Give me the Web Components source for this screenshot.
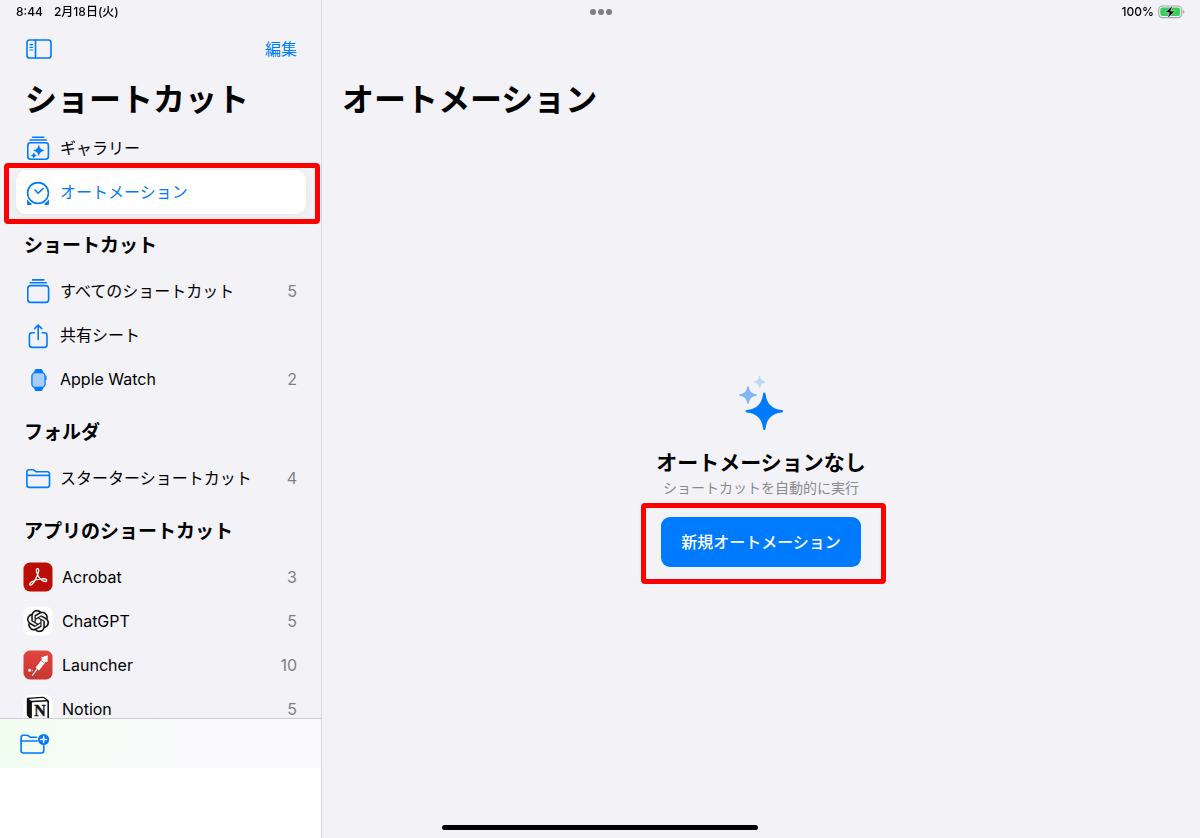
<!DOCTYPE html>
<html lang="ja">
<head>
<meta charset="UTF-8">
<meta name="viewport" content="width=device-width, initial-scale=1">
<title>ショートカット</title>
<style>
  :root {
    --accent: #007aff;
    --surface: #f2f2f7;
    --separator: #d8d8dd;
    --mark: #ff0000;
  }

  body {
    margin: 0;
    font-family: Inter, "Noto Sans CJK JP", sans-serif;
    font-size: 16px;
    line-height: 20px;
    color: #000;
    background: var(--surface);
  }
</style>
</head>
<body>

<shortcuts-app>
  <status-bar slot="status" time="8:44" date="2月18日(火)" battery="100%"></status-bar>

  <side-bar slot="sidebar" heading="ショートカット">
    <side-row icon="gallery">ギャラリー</side-row>
    <side-row icon="clock" selected>オートメーション<mark-frame slot="mark"></mark-frame></side-row>
    <side-heading>ショートカット</side-heading>
    <side-row icon="stack" count="5">すべてのショートカット</side-row>
    <side-row icon="share">共有シート</side-row>
    <side-row icon="watch" count="2">Apple Watch</side-row>
    <side-heading>フォルダ</side-heading>
    <side-row icon="folder" count="4">スターターショートカット</side-row>
    <side-heading>アプリのショートカット</side-heading>
    <side-row app icon="acrobat" count="3">Acrobat</side-row>
    <side-row app icon="chatgpt" count="5">ChatGPT</side-row>
    <side-row app icon="launcher" count="10">Launcher</side-row>
    <side-row app icon="notion" count="5">Notion</side-row>
  </side-bar>

  <automation-view heading="オートメーション">
    <empty-state>
      <span slot="title">オートメーションなし</span>
      <span slot="text">ショートカットを自動的に実行</span>
      <span slot="action">新規オートメーション</span>
      <mark-frame slot="mark"></mark-frame>
    </empty-state>
  </automation-view>
</shortcuts-app>

<script>
const ICONS = {
  toggle: [26, 20, `
    <g fill="none" stroke="currentColor" stroke-width="1.6" stroke-linecap="round">
      <rect x="1" y="1" width="24" height="18" rx="2.6"/>
      <path d="M9.5 1v18"/>
      <path d="M4 5.6h2.6M4 8.3h2.6M4 11h2.6" stroke-width="1.2"/>
    </g>`],
  gallery: [30, 30, `
    <g fill="none" stroke="currentColor" stroke-width="1.6" stroke-linecap="round">
      <rect x="4.8" y="9.8" width="20.6" height="16.4" rx="2.6"/>
      <path d="M9.6 4.2h11.2M7.2 7h16"/>
    </g>
    <path fill="currentColor" d="M15.8 12q.8 4.7 5.400 5.400q-4.600.8-5.400 5.400q-.8-4.600-5.400-5.400q4.600-.8 5.400-5.400zM10.800 19.800q.5 2.200 2.600 2.600q-2.100.5-2.600 2.600q-.5-2.100-2.600-2.600q2.100-.5 2.600-2.600z" stroke="currentColor" stroke-width=".3"/>`],
  clock: [30, 30, `
    <g fill="none" stroke="currentColor" stroke-width="1.6" stroke-linecap="round" stroke-linejoin="round">
      <circle cx="15" cy="16" r="10.400"/>
      <path d="M12 13l3.100 3.200 5-4.700"/>
    </g>
    <path fill="currentColor" d="M4.100 22.200q1.600 2.800 5 4.800l-1.200 1H5q-1 0-1-1zM25.900 22.200q-1.600 2.800-5 4.800l1.200 1H25q1 0 1-1z"/>`],
  stack: [30, 30, `
    <g fill="none" stroke="currentColor" stroke-width="1.6" stroke-linecap="round">
      <rect x="4.8" y="9.6" width="20.8" height="16.8" rx="2.8"/>
      <path d="M9.6 3.9h11.2M7.2 6.7h16"/>
    </g>`],
  share: [30, 30, `
    <g fill="none" stroke="currentColor" stroke-width="1.6" stroke-linecap="round" stroke-linejoin="round">
      <path d="M11.2 12.8H9q-2.600 0-2.600 2.600v9.400q0 2.600 2.600 2.600h12.400q2.600 0 2.600-2.600v-9.400q0-2.600-2.600-2.600h-2.200"/>
      <path d="M15.200 19.600V5.300M11.600 8.600l3.600-3.500 3.600 3.500"/>
    </g>`],
  watch: [30, 30, `
    <path fill="currentColor" d="M11.5 6.500q.3-1.500 1.800-1.500h4.600q1.500 0 1.800 1.500l.9 3.500v12l-.9 3.500q-.3 1.500-1.800 1.500h-4.600q-1.500 0-1.800-1.500l-.9-3.500V10z"/>
    <rect x="8.900" y="8.700" width="13.200" height="14.800" rx="3.600" fill="#a6cdfb" stroke="currentColor" stroke-width="1.300"/>
    <path d="M23 12.500v3" stroke="currentColor" stroke-width="1.200" stroke-linecap="round"/>`],
  folder: [30, 30, `
    <g fill="none" stroke="currentColor" stroke-width="1.6" stroke-linejoin="round">
      <path d="M3.900 9q0-2.200 2.300-2.200h3.500q.9 0 1.600.6l1.200 1q.5.400 1.300.400h10.500q2.200 0 2.200 2.200v11q0 2.400-2.400 2.400H6.300q-2.400 0-2.400-2.400z"/>
      <path d="M3.900 12.400h22.600"/>
    </g>`],
  newFolder: [30, 22, `
    <g fill="none" stroke="currentColor" stroke-width="1.6" stroke-linecap="round" stroke-linejoin="round">
      <path d="M16.500 4.300H11q-.8 0-1.300-.4l-1.200-1q-.7-.6-1.600-.6H3.500q-2.400 0-2.400 2.300v13q0 2.400 2.400 2.400h18q2.300 0 2.300-2.400v-4.800"/>
      <path d="M1.100 8h16.200"/>
    </g>
    <circle cx="23.600" cy="6.500" r="5.600" fill="currentColor"/>
    <path d="M20.600 6.500h6M23.600 3.500v6" stroke="#fff" stroke-width="1.400" stroke-linecap="round"/>`],
  sparkles: [44, 54, `
    <path fill="#007aff" d="M25.300 16.500q1 0 1.200 1.300q1.500 14.800 16.300 16.300q1.300.2 1.300 1.200t-1.300 1.200q-14.800 1.500-16.300 16.300q-.2 1.300-1.200 1.300t-1.200-1.300q-1.500-14.800-16.300-16.300q-1.300-.2-1.300-1.200t1.300-1.200q14.800-1.500 16.300-16.300q.2-1.300 1.200-1.300z"/>
    <path fill="#7db7fa" d="M9 10q.6 0 .7.800q.8 6.700 7.500 7.500q.8.100.8.700t-.8.700q-6.700.8-7.500 7.500q-.1.800-.7.800t-.7-.8q-.8-6.700-7.500-7.500q-.8-.1-.8-.7t.8-.7q6.700-.8 7.500-7.500q.1-.8.7-.8z"/>
    <path fill="#bad8fb" d="M20.600 0q.5 0 .6.600q.5 4.300 4.800 4.800q.6.100.6.600t-.6.600q-4.300.5-4.800 4.800q-.1.600-.6.600t-.6-.6q-.5-4.300-4.800-4.800q-.6-.1-.6-.6t.6-.6q4.300-.5 4.800-4.800q.1-.6.6-.6z"/>`],
  acrobat: [30, 30, `
    <rect x=".5" y=".5" width="29" height="29" rx="6.500" fill="#b90d05"/>
    <path fill="none" stroke="#fff" stroke-width="1.300" stroke-linejoin="round" d="M14.900 6.700c-1.500-.3-1.900 1.600-1.200 3.700 1.100 3.600 4.200 7.600 6.800 8.700 1.900.8 3.300.3 3.200-.8-.1-1.200-2-1.700-4.600-1.500-3.600.2-7.700 1.400-10.300 2.900-1.900 1.100-2.600 2.500-1.700 3.200 1 .7 2.800-1 4.600-4.300 1.800-3.200 3.500-6.700 3.900-9.300.2-1.500 0-2.500-.7-2.600z"/>`],
  chatgpt: [30, 30, `
    <rect x=".5" y=".5" width="29" height="29" rx="6.500" fill="#fff"/>
    <path transform="translate(4 4) scale(.92)" fill="#111" stroke="#111" stroke-width=".2" d="M22.2819 9.8211a5.9847 5.9847 0 0 0-.5157-4.9108 6.0462 6.0462 0 0 0-6.5098-2.9A6.0651 6.0651 0 0 0 4.9807 4.1818a5.9847 5.9847 0 0 0-3.9977 2.9 6.0462 6.0462 0 0 0 .7427 7.0966 5.98 5.98 0 0 0 .511 4.9107 6.051 6.051 0 0 0 6.5146 2.9001A5.9847 5.9847 0 0 0 13.2599 24a6.0557 6.0557 0 0 0 5.7718-4.2058 5.9894 5.9894 0 0 0 3.9977-2.9001 6.0557 6.0557 0 0 0-.7475-7.0729zm-9.022 12.6081a4.4755 4.4755 0 0 1-2.8764-1.0408l.1419-.0804 4.7783-2.7582a.7948.7948 0 0 0 .3927-.6813v-6.7369l2.02 1.1686a.071.071 0 0 1 .038.052v5.5826a4.504 4.504 0 0 1-4.4945 4.4944zm-9.6607-4.1254a4.4708 4.4708 0 0 1-.5346-3.0137l.142.0852 4.783 2.7582a.7712.7712 0 0 0 .7806 0l5.8428-3.3685v2.3324a.0804.0804 0 0 1-.0332.0615L9.74 19.9502a4.4992 4.4992 0 0 1-6.1408-1.6464zM2.3408 7.8956a4.485 4.485 0 0 1 2.3655-1.9728V11.6a.7664.7664 0 0 0 .3879.6765l5.8144 3.3543-2.0201 1.1685a.0757.0757 0 0 1-.071 0l-4.8303-2.7865A4.504 4.504 0 0 1 2.3408 7.872zm16.5963 3.8558L13.1038 8.364 15.1192 7.2a.0757.0757 0 0 1 .071 0l4.8303 2.7913a4.4944 4.4944 0 0 1-.6765 8.1042v-5.6772a.79.79 0 0 0-.407-.667zm2.0107-3.0231l-.142-.0852-4.7735-2.7818a.7759.7759 0 0 0-.7854 0L9.409 9.2297V6.8974a.0662.0662 0 0 1 .0284-.0615l4.8303-2.7866a4.4992 4.4992 0 0 1 6.6802 4.66zM8.3065 12.863l-2.02-1.1638a.0804.0804 0 0 1-.038-.0567V6.0742a4.4992 4.4992 0 0 1 7.3757-3.4537l-.142.0805L8.704 5.459a.7948.7948 0 0 0-.3927.6813zm1.0976-2.3654l2.602-1.4998 2.6069 1.4998v2.9994l-2.5974 1.4997-2.6067-1.4997Z"/>`],
  launcher: [30, 30, `
    <defs>
      <linearGradient id="red" x1="0" y1="0" x2="0" y2="1">
        <stop offset="0" stop-color="#e2463f"/>
        <stop offset="1" stop-color="#c6362f"/>
      </linearGradient>
    </defs>
    <rect x=".5" y=".5" width="29" height="29" rx="6.500" fill="url(#red)"/>
    <path fill="#fff" d="M24.800 5.200l-.2 6.900-1.900-.3-6.600 8.700-3.500-2.700 6.400-8.900-1.100-1.400z"/>
    <path d="M17.800 10.200l3.600 2.700" stroke="#d23e37" stroke-width=".8"/>
    <path d="M13.800 19.600l-4.300 5.600" stroke="#fff" stroke-width="1.100" stroke-linecap="round"/>
    <circle cx="6.700" cy="20.300" r="1.500" fill="#fff"/>
    <circle cx="9.400" cy="20.600" r=".6" fill="#fff"/>`],
  notion: [30, 30, `
    <rect x=".5" y=".5" width="29" height="29" rx="6.500" fill="#fff"/>
    <path fill="#111" d="M3.800 4.900q0-1 1-1.100l14.600-1.100q1.300-.1 2.200.6l3.600 2.700q.8.600.8 1.600V25q0 1.300-1.300 1.400l-15 .9q-1 .1-1.700-.8l-3.500-4.500q-.7-.9-.7-2z"/>
    <path fill="#fff" d="M5.800 4.900l13.600-1q.8 0 1.400.4l2.300 1.600-13.900.9q-.8 0-1.400-.4zM8.900 9.200q0-.9.900-.9l13.800-.8q.8 0 .8.800v16q0 .8-.8.800l-13.800.8q-.9 0-.9-.8z"/>
    <text x="17" y="22" text-anchor="middle" font-family="Liberation Serif, serif" font-weight="bold" font-size="16" fill="#111" stroke="#111" stroke-width=".4">N</text>`],
  battery: [28, 14, `
    <rect x=".7" y="1" width="23" height="11.600" rx="3.600" fill="none" stroke="#a5a5aa" stroke-width="1.100"/>
    <rect x="2.300" y="2.600" width="19.800" height="8.400" rx="2.200" fill="#34d058"/>
    <path fill="#a5a5aa" d="M25 5q1.500.6 1.500 1.900t-1.500 1.900z"/>
    <path fill="#000" stroke="#f2f2f7" stroke-width=".6" d="M14.600.5L6.800 7.700h4.500l-1.900 5.800 7.900-7.400h-4.600z"/>`]
};

// Shared base: puts the element's template into an open shadow root.
class BaseElement extends HTMLElement {
  constructor() {
    super();
    const template = document.createElement('template');
    template.innerHTML = this.template();
    this.attachShadow({ mode: 'open' }).appendChild(template.content.cloneNode(true));
  }

  attr(name) {
    return this.getAttribute(name) || '';
  }
}

class AppIcon extends BaseElement {
  template() {
    const [width, height, shapes] = ICONS[this.attr('name')];
    return `
      <style>
        :host { display: block; flex: none; }
        svg { display: block; }
      </style>
      <svg width="${width}" height="${height}" viewBox="0 0 ${width} ${height}" aria-hidden="true">${shapes}</svg>
    `;
  }
}

class MarkFrame extends BaseElement {
  template() {
    return `
      <style>
        :host {
          position: absolute;
          inset: var(--mark-inset);
          border: 5px solid var(--mark);
          border-radius: 4px;
          pointer-events: none;
        }
      </style>
    `;
  }
}

class ShortcutsApp extends BaseElement {
  template() {
    return `
      <style>
        :host {
          display: grid;
          grid-template-columns: 322px 1fr;
          height: 100vh;
          position: relative;
        }
        .status {
          position: absolute;
          inset: 0 0 auto;
        }
        .home {
          position: absolute;
          bottom: 8px;
          left: 50%;
          transform: translateX(-50%);
          width: 316px;
          height: 5px;
          border-radius: 3px;
          background: #000;
        }
      </style>
      <slot name="sidebar"></slot>
      <slot></slot>
      <div class="status"><slot name="status"></slot></div>
      <div class="home"></div>
    `;
  }
}

class StatusBar extends BaseElement {
  template() {
    return `
      <style>
        :host {
          display: grid;
          grid-template-columns: 1fr auto 1fr;
          align-items: center;
          height: 24px;
          padding: 0 14px 0 16px;
          font-size: 12px;
          line-height: 16px;
          font-weight: 500;
        }
        .left, .right, .dots { display: flex; align-items: center; }
        .left { gap: 11px; align-items: baseline; }
        .right { gap: 4px; justify-content: flex-end; }
        .dots { gap: 2px; }
        .dots i {
          width: 6px;
          height: 6px;
          border-radius: 50%;
          background: #7c7c80;
        }
      </style>
      <div class="left"><span>${this.attr('time')}</span><span>${this.attr('date')}</span></div>
      <div class="dots"><i></i><i></i><i></i></div>
      <div class="right"><span>${this.attr('battery')}</span><app-icon name="battery"></app-icon></div>
    `;
  }
}

class SideBar extends BaseElement {
  template() {
    return `
      <style>
        :host {
          display: flex;
          flex-direction: column;
          box-sizing: border-box;
          min-height: 0;
          border-right: 1px solid var(--separator);
          background: #fff;
        }
        .content {
          flex: 1;
          min-height: 0;
          overflow-y: auto;
          scrollbar-width: none;
          padding-top: 24px;
          background: var(--surface);
        }
        header {
          display: flex;
          align-items: center;
          justify-content: space-between;
          height: 50px;
          padding: 0 24px 0 26px;
        }
        button {
          padding: 0;
          border: 0;
          background: none;
          font: inherit;
          color: var(--accent);
          cursor: pointer;
        }
        h1 {
          margin: 0;
          padding: 2px 25px;
          font-size: 32px;
          line-height: 48px;
          font-weight: 700;
        }
        nav { padding: 0 15px 0 16px; }
        footer {
          display: flex;
          align-items: center;
          height: 49px;
          padding: 0 20px;
          margin-bottom: 70px;
          border-top: 1px solid #cdcdd2;
          background: linear-gradient(100deg, #f0fff0, #f9fbf9 35%, #fafafc 60%);
        }
      </style>
      <div class="content">
        <header>
          <button aria-label="サイドバー"><app-icon name="toggle"></app-icon></button>
          <button>編集</button>
        </header>
        <h1>${this.attr('heading')}</h1>
        <nav><slot></slot></nav>
      </div>
      <footer>
        <button aria-label="新規フォルダ"><app-icon name="newFolder"></app-icon></button>
      </footer>
    `;
  }
}

class SideHeading extends BaseElement {
  template() {
    return `
      <style>
        :host { display: block; }
        h2 {
          margin: 0;
          padding: 9px 8px 0;
          font-size: 19px;
          line-height: 46px;
          font-weight: 700;
        }
      </style>
      <h2><slot></slot></h2>
    `;
  }
}

class SideRow extends BaseElement {
  template() {
    return `
      <style>
        :host {
          display: block;
          position: relative;
          --mark-inset: -7px -14px -10px -12px;
        }
        a {
          display: flex;
          align-items: center;
          gap: 7px;
          height: 44px;
          padding: 0 9px 0 7px;
          border-radius: 10px;
          color: inherit;
          text-decoration: none;
        }
        app-icon { color: var(--accent); }
        .label { flex: 1; white-space: nowrap; }
        .count { color: #7f7f84; }
        :host([app]) a { gap: 9px; }
        :host([selected]) a {
          color: var(--accent);
          background: #fff;
          box-shadow: 0 2px 16px rgba(0, 0, 0, 0.06);
        }
      </style>
      <a href="#">
        <app-icon name="${this.attr('icon')}"></app-icon>
        <span class="label"><slot></slot></span>
        <span class="count">${this.attr('count')}</span>
      </a>
      <slot name="mark"></slot>
    `;
  }
}

class AutomationView extends BaseElement {
  template() {
    return `
      <style>
        :host {
          display: flex;
          flex-direction: column;
          padding: 76px 20px 20px;
        }
        h1 {
          margin: 0;
          font-size: 32px;
          line-height: 48px;
          font-weight: 700;
        }
        main {
          flex: 1;
          display: grid;
          place-content: center;
        }
      </style>
      <h1>${this.attr('heading')}</h1>
      <main><slot></slot></main>
    `;
  }
}

class EmptyState extends BaseElement {
  template() {
    return `
      <style>
        :host {
          display: flex;
          flex-direction: column;
          align-items: center;
          --mark-inset: -14px -25px -17px -20px;
        }
        h2 {
          margin: 18px 0 0;
          font-size: 21px;
          line-height: 30px;
          font-weight: 700;
        }
        p {
          margin: 0 0 19px;
          font-size: 14px;
          line-height: 20px;
          color: #8a8a8e;
        }
        .action { position: relative; }
        button {
          display: block;
          height: 50px;
          padding: 0 20px;
          border: 0;
          border-radius: 9px;
          background: var(--accent);
          color: #fff;
          font: inherit;
          font-weight: 500;
          cursor: pointer;
        }
      </style>
      <app-icon name="sparkles"></app-icon>
      <h2><slot name="title"></slot></h2>
      <p><slot name="text"></slot></p>
      <div class="action">
        <button><slot name="action"></slot></button>
        <slot name="mark"></slot>
      </div>
    `;
  }
}

customElements.define('app-icon', AppIcon);
customElements.define('mark-frame', MarkFrame);
customElements.define('shortcuts-app', ShortcutsApp);
customElements.define('status-bar', StatusBar);
customElements.define('side-bar', SideBar);
customElements.define('side-heading', SideHeading);
customElements.define('side-row', SideRow);
customElements.define('automation-view', AutomationView);
customElements.define('empty-state', EmptyState);
</script>
</body>
</html>
